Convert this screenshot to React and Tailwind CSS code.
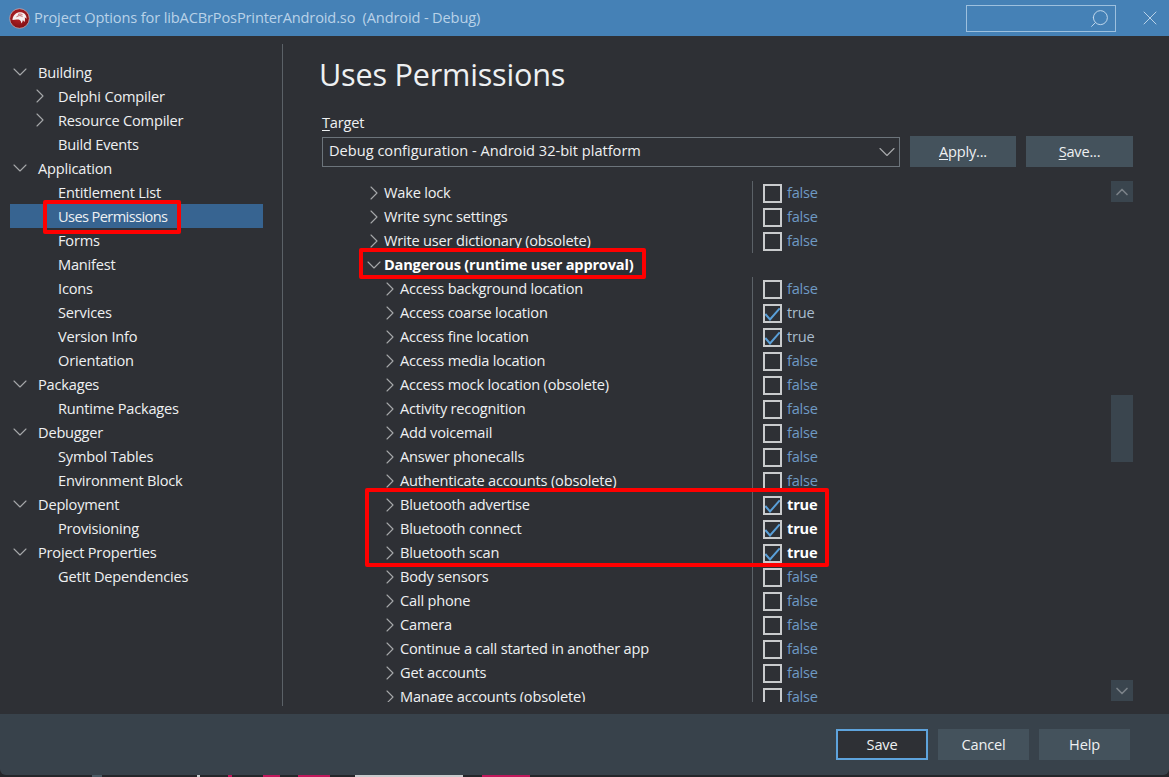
import { ChevronDown, ChevronRight, ChevronUp, Search, X } from "lucide-react";

const sidebar = [
  { label: "Building", depth: 0, arrow: "down" },
  { label: "Delphi Compiler", depth: 1, arrow: "right" },
  { label: "Resource Compiler", depth: 1, arrow: "right" },
  { label: "Build Events", depth: 1 },
  { label: "Application", depth: 0, arrow: "down" },
  { label: "Entitlement List", depth: 1 },
  { label: "Uses Permissions", depth: 1, selected: true },
  { label: "Forms", depth: 1 },
  { label: "Manifest", depth: 1 },
  { label: "Icons", depth: 1 },
  { label: "Services", depth: 1 },
  { label: "Version Info", depth: 1 },
  { label: "Orientation", depth: 1 },
  { label: "Packages", depth: 0, arrow: "down" },
  { label: "Runtime Packages", depth: 1 },
  { label: "Debugger", depth: 0, arrow: "down" },
  { label: "Symbol Tables", depth: 1 },
  { label: "Environment Block", depth: 1 },
  { label: "Deployment", depth: 0, arrow: "down" },
  { label: "Provisioning", depth: 1 },
  { label: "Project Properties", depth: 0, arrow: "down" },
  { label: "GetIt Dependencies", depth: 1 },
];

const permissions = [
  { label: "Wake lock", top: true },
  { label: "Write sync settings", top: true },
  { label: "Write user dictionary (obsolete)", top: true },
  { label: "Dangerous (runtime user approval)", header: true },
  { label: "Access background location" },
  { label: "Access coarse location", value: true },
  { label: "Access fine location", value: true },
  { label: "Access media location" },
  { label: "Access mock location (obsolete)" },
  { label: "Activity recognition" },
  { label: "Add voicemail" },
  { label: "Answer phonecalls" },
  { label: "Authenticate accounts (obsolete)" },
  { label: "Bluetooth advertise", value: true, bold: true },
  { label: "Bluetooth connect", value: true, bold: true },
  { label: "Bluetooth scan", value: true, bold: true },
  { label: "Body sensors" },
  { label: "Call phone" },
  { label: "Camera" },
  { label: "Continue a call started in another app" },
  { label: "Get accounts" },
  { label: "Manage accounts (obsolete)" },
];

function Logo() {
  return (
    <svg width="21" height="21" viewBox="0 0 21 21" className="shrink-0">
      <defs>
        <radialGradient id="logoRed" cx="45%" cy="40%" r="65%">
          <stop offset="0%" stopColor="#c0242a" />
          <stop offset="100%" stopColor="#7a0f14" />
        </radialGradient>
      </defs>
      <circle cx="10.500" cy="10.500" r="9.800" fill="url(#logoRed)" stroke="#d9b5b5" strokeWidth="0.700" />
      <path d="M3.500 11.500C4 6.500 8 3.800 12 4.200c3.400.4 5.500 3 5.600 6.500l-1.900-1.400c.5 1.700.4 3.300-.3 4.800l-1.500-2.200c-.2 1.400-.7 2.600-1.600 3.500-.1-2.200-1-3.500-2.800-3.800-1.700-.3-3.600-.2-6 .5z" fill="#f6f0f0" />
      <path d="M7.500 8.800c1.800-1.500 4.300-1.500 6-.2M9 6.400c1.500-.6 3.200-.5 4.600.4" fill="none" stroke="#b5343a" strokeWidth="0.800" />
    </svg>
  );
}

function Checkbox({ checked }) {
  return (
    <div className="relative w-[19px] h-[19px] shrink-0 border-2 border-[#c9cbcd]">
      {checked && (
        <svg width="15" height="15" viewBox="0 0 15 15" className="absolute left-0 top-0">
          <path d="M0.300 8 L5 13.500 L14.700 2.300" fill="none" stroke="#5a9fd8" strokeWidth="2" />
        </svg>
      )}
    </div>
  );
}

function Key({ children }) {
  return <span className="underline underline-offset-2">{children}</span>;
}

function RowArrow({ down }) {
  const Icon = down ? ChevronDown : ChevronRight;
  return <Icon size={24} strokeWidth={1.1} className="shrink-0 text-[#a6a8aa]" />;
}

function PermissionRow({ row }) {
  if (row.header) {
    return (
      <div className="h-6 flex items-center shrink-0">
        <span className="ml-[44px] w-[20px] flex justify-center"><RowArrow down /></span>
        <span className="pb-[2px] font-bold text-white">{row.label}</span>
      </div>
    );
  }
  return (
    <div className="h-6 flex items-center shrink-0">
      <div className={`flex items-center w-[432px] ${row.top ? "pl-[44px]" : "pl-[60px]"}`}>
        <span className="w-[20px] flex justify-center"><RowArrow /></span>
        <span className="pb-[2px] text-[#eef0f2]">{row.label}</span>
      </div>
      <div className="w-[11px] h-6 border-l border-[#5b6167]" />
      <Checkbox checked={row.value} />
      <span className={`ml-[5px] pb-[2px] ${row.bold ? "font-bold text-white" : row.value ? "text-[#a9bccd]" : "text-[#6f9ac4]"}`}>
        {row.value ? "true" : "false"}
      </span>
    </div>
  );
}

export default function App() {
  return (
    <div className="w-[1169px] h-[777px] overflow-hidden bg-[#25262a] relative text-[14.6px] leading-6 text-[#eef0f2] font-['Open_Sans','Noto_Sans',sans-serif] tracking-[-0.2px]">
      <div className="h-[775px] flex flex-col rounded-b-md overflow-hidden bg-[#2e3035]">
        <header className="h-9 shrink-0 flex items-center bg-[#4581b6] pl-[9px]">
          <Logo />
          <span className="ml-[4px] pb-[2px] text-[#b9d2e8] tracking-[-0.14px]">Project Options for libACBrPosPrinterAndroid.so&nbsp; (Android - Debug)</span>
          <div className="ml-auto w-[150px] h-[27px] border border-[#9dc0de] flex items-center justify-end pr-[5px]">
            <Search size={21} strokeWidth={1.1} className="text-[#c3d9ec] -scale-x-100" />
          </div>
          <X size={24} strokeWidth={1} className="ml-[22px] mr-[7px] text-[#b9d2e8]" />
        </header>

        <main className="flex-1 flex min-h-0">
          <nav className="w-[283px] shrink-0 pt-[24px] pl-[10px] pr-[20px] pb-2 relative">
            {sidebar.map((item) => (
              <div key={item.label} className={`h-6 flex items-center ${item.selected ? "bg-[#376491]" : ""}`}>
                <span className={`flex justify-center w-[16px] ${item.depth ? "ml-[22px]" : "ml-[2px]"}`}>
                  {item.arrow && <RowArrow down={item.arrow === "down"} />}
                </span>
                <span className={`ml-[10px] ${item.selected ? "tracking-[-0.6px]" : ""}`}>{item.label}</span>
              </div>
            ))}
            <div className="absolute right-0 top-2 bottom-2 w-px bg-[#5b6167]" />
          </nav>

          <section className="flex-1 min-w-0 pl-[36px] pr-[36px] relative">
            <h1 className="mt-[16px] h-11 text-[30.600px] leading-11 font-normal tracking-[-0.2px] text-[#eef0f2]">Uses Permissions</h1>
            <div className="mt-[14px] ml-[3px] h-6"><Key>T</Key>arget</div>
            <div className="flex ml-[3px] gap-[10px] mt-[2px]">
              <div className="w-[578px] h-[30px] mt-px border border-[#6c747b] flex items-center pl-[6px]">
                <span className="flex-1 pb-[5px] tracking-normal">Debug configuration - Android 32-bit platform</span>
                <ChevronDown size={28} strokeWidth={1} className="-mr-[2px] text-[#a6a8aa]" />
              </div>
              <button className="w-[106px] h-[31px] pb-[2px] bg-[#44525c] text-center"><Key>A</Key>pply...</button>
              <button className="w-[107px] h-[31px] pb-[2px] bg-[#44525c] text-center"><Key>S</Key>ave...</button>
            </div>

            <div className="relative mt-[14px] ml-px h-[521px] overflow-hidden flex flex-col">
              {permissions.map((row) => (
                <PermissionRow key={row.label} row={row} />
              ))}
              <button className="absolute right-0 top-0 w-[22px] h-[21px] bg-[#3a454e] flex items-center justify-center">
                <ChevronUp size={20} strokeWidth={2} className="text-[#7b8288]" />
              </button>
              <div className="absolute right-0 top-[214px] w-[22px] h-[67px] bg-[#3a454e]" />
              <button className="absolute right-0 top-[499px] w-[22px] h-[21px] bg-[#3a454e] flex items-center justify-center">
                <ChevronDown size={20} strokeWidth={2} className="text-[#7b8288]" />
              </button>
            </div>
          </section>
        </main>

        <footer className="h-[61px] shrink-0 bg-[#38424b] flex items-start justify-end gap-[10px] pt-[15px] pr-[39px]">
          <button className="w-[92px] h-[31px] pb-[2px] border-2 border-[#5ea3dc] bg-[#2e3035]">Save</button>
          <button className="w-[91px] h-[31px] pb-[2px] bg-[#44525c]">Cancel</button>
          <button className="w-[91px] h-[31px] pb-[2px] bg-[#44525c]">Help</button>
        </footer>
      </div>

      {/* clipped bits of the window behind the dialog */}
      <div className="absolute left-[92px] bottom-0 w-[10px] h-[2px] bg-[#4b5a64]" />
      <div className="absolute left-[197px] bottom-0 w-[3px] h-[2px] bg-[#c9cbcd]" />
      <div className="absolute left-[228px] bottom-0 w-[4px] h-[2px] bg-[#c2185b]" />
      <div className="absolute left-[263px] bottom-0 w-[17px] h-[2px] bg-[#c2185b]" />
      <div className="absolute left-[298px] bottom-0 w-[32px] h-[2px] bg-[#c2185b]" />
      <div className="absolute left-[355px] bottom-0 w-[108px] h-[2px] bg-[#c9cbcd]" />
      <div className="absolute left-[482px] bottom-0 w-[48px] h-[2px] bg-[#c2185b]" />

      {/* red annotation boxes */}
      <div className="absolute left-[43px] top-[200px] w-[138px] h-[34px] border-4 border-[#ff0000] rounded-[2px]" />
      <div className="absolute left-[359px] top-[248px] w-[287px] h-[31px] border-4 border-[#ff0000] rounded-[2px]" />
      <div className="absolute left-[365px] top-[488px] w-[464px] h-[79px] border-4 border-[#ff0000] rounded-[2px]" />
    </div>
  );
}
